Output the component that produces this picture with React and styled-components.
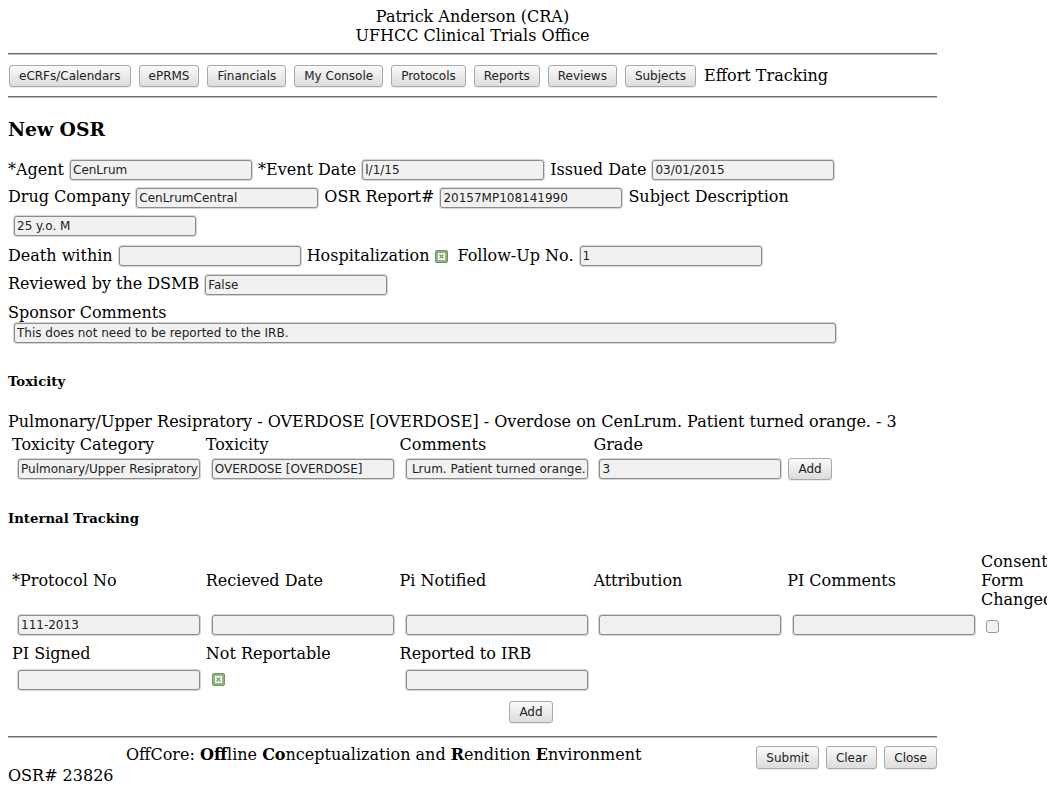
import React from "react";
import styled, { createGlobalStyle } from "styled-components";

const Global = createGlobalStyle`
  html {
    overflow: hidden;
  }
  body {
    margin: 8px 8px 0;
    background: #fff;
    color: #000;
    font-family: "DejaVu Serif", serif;
    font-size: 16px;
  }
`;

const Page = styled.div`
  width: 929px;
  line-height: 1.164;
`;

const Header = styled.div`
  text-align: center;
`;

const Rule = styled.hr`
  margin: ${(p) => p.$top || 8}px 0 8px;
  border: 0;
  border-top: 1px solid #6f6f6f;
  border-bottom: 1px solid #b8b8b8;
  height: 0;
`;

const Nav = styled.nav`
  display: flex;
  align-items: center;
  height: 25px;
  gap: 8px;
  padding-left: 1px;
`;

const Btn = styled.button`
  font-family: "DejaVu Sans", sans-serif;
  font-size: 12px;
  color: #222;
  height: ${(p) => p.$h || 22}px;
  padding: 0 ${(p) => p.$pad || 9}px;
  border: 1px solid #a9a9a9;
  border-radius: 3px;
  background: linear-gradient(#fafafa, #dcdcdc);
  box-shadow: 0 1px 0 rgba(0, 0, 0, 0.08);
  cursor: pointer;
  flex: none;
`;

const NavText = styled.span`
  padding-top: 2px;
`;

const Title = styled.h3`
  font-size: 18.72px;
  font-weight: bold;
  margin: 20px 0 16px;
  line-height: 22px;
`;

const Row = styled.div`
  display: flex;
  align-items: ${(p) => (p.$bottom ? "flex-end" : "center")};
  gap: 5px;
  height: ${(p) => p.$h || 27}px;
  padding-left: ${(p) => p.$indent || 0}px;
  white-space: nowrap;
`;

const Input = styled.input`
  box-sizing: border-box;
  font-family: "DejaVu Sans", sans-serif;
  font-size: 12px;
  color: #222;
  width: ${(p) => p.$w || 182}px;
  height: 20px;
  margin: 0 1px;
  padding: 0 1px 0 2px;
  border: 1px solid #8c8c8c;
  border-radius: 3px;
  background: #f1f1f1;
  box-shadow: 0 0 0 1px #d6d6d6;
  outline: none;
  text-align: ${(p) => p.$align || "left"};
  flex: none;
`;

const GreenCheck = styled.span`
  display: inline-flex;
  align-items: center;
  justify-content: center;
  box-sizing: border-box;
  width: 13px;
  height: 13px;
  margin: 0 ${(p) => p.$after || 2}px 0 1px;
  background: #8fb57c;
  border: 1px solid #6e9460;
  border-radius: 2px;
  flex: none;
`;

const EmptyCheck = styled.span`
  display: inline-block;
  box-sizing: border-box;
  width: 13px;
  height: 13px;
  margin-top: 3px;
  background: #f2f2f2;
  border: 1px solid #9a9a9a;
  border-radius: 3px;
`;

const SectionTitle = styled.h5`
  font-size: 13.28px;
  font-weight: bold;
  margin: ${(p) => p.$top || 28}px 0 0;
  line-height: 16px;
`;

const Summary = styled.div`
  margin-top: 22px;
  line-height: 19px;
  white-space: nowrap;
`;

const Grid = styled.div`
  display: grid;
  grid-template-columns: repeat(${(p) => p.$cols}, 193.8px) auto;
  margin-left: 4px;
  margin-top: ${(p) => p.$top || 0}px;
  align-items: center;
  width: max-content;
`;

const HeadCell = styled.div`
  height: ${(p) => p.$h || 19}px;
  display: flex;
  align-items: center;
  line-height: 18.6px;
  white-space: nowrap;
`;

const Cell = styled.div`
  display: flex;
  align-items: center;
  gap: 6px;
  height: ${(p) => p.$h || 25}px;
  padding-left: 5px;
`;

const Center = styled.div`
  display: flex;
  justify-content: center;
  width: 1046px;
  margin-top: ${(p) => p.$top || 0}px;
`;

const Footer = styled.div`
  display: flex;
  justify-content: space-between;
  align-items: flex-start;
`;

const Tagline = styled.div`
  padding-left: 118px;
  line-height: 18.6px;
`;

const Osr = styled.div`
  margin-top: 2px;
  line-height: 18.6px;
`;

const Buttons = styled.div`
  display: flex;
  gap: 7px;
`;

function Checked({ after }) {
  return (
    <GreenCheck $after={after}>
      <svg width="7" height="7" viewBox="0 0 7 7">
        <rect x="0" y="0" width="7" height="7" fill="#fff" />
        <path d="M1.5 1.5 L5.5 5.5 M5.5 1.5 L1.5 5.5" stroke="#7a9a6c" strokeWidth="1.3" />
      </svg>
    </GreenCheck>
  );
}

export default function App() {
  const nav = [
    "eCRFs/Calendars",
    "ePRMS",
    "Financials",
    "My Console",
    "Protocols",
    "Reports",
    "Reviews",
    "Subjects",
  ];
  return (
    <Page>
      <Global />
      <Header>
        <div>Patrick Anderson (CRA)</div>
        <div>UFHCC Clinical Trials Office</div>
      </Header>
      <Rule />
      <Nav>
        {nav.map((n) => (
          <Btn key={n}>{n}</Btn>
        ))}
        <NavText>Effort Tracking</NavText>
      </Nav>
      <Rule />
      <Title>New OSR</Title>

      <Row $h={28}>
        <span>*Agent</span>
        <Input defaultValue="CenLrum" />
        <span>*Event Date</span>
        <Input defaultValue="l/1/15" />
        <span>Issued Date</span>
        <Input defaultValue="03/01/2015" />
      </Row>
      <Row $h={27}>
        <span>Drug Company</span>
        <Input defaultValue="CenLrumCentral" />
        <span>OSR Report#</span>
        <Input defaultValue="20157MP108141990" />
        <span>Subject Description</span>
      </Row>
      <Row $h={30} $indent={5}>
        <Input defaultValue="25 y.o. M" />
      </Row>
      <Row $h={30}>
        <span>Death within</span>
        <Input />
        <span>Hospitalization</span>
        <Checked after={4} />
        <span>Follow-Up No.</span>
        <Input defaultValue="1" />
      </Row>
      <Row $h={27}>
        <span>Reviewed by the DSMB</span>
        <Input defaultValue="False" />
      </Row>
      <Row $h={24} $bottom>
        <span>Sponsor Comments</span>
      </Row>
      <Row $h={22} $indent={5}>
        <Input $w={822} defaultValue="This does not need to be reported to the IRB." />
      </Row>

      <SectionTitle $top={30}>Toxicity</SectionTitle>
      <Summary>
        Pulmonary/Upper Resipratory - OVERDOSE [OVERDOSE] - Overdose on CenLrum. Patient turned orange. - 3
      </Summary>
      <Grid $cols={4} $top={4}>
        <HeadCell $h={21}>Toxicity Category</HeadCell>
        <HeadCell $h={21}>Toxicity</HeadCell>
        <HeadCell $h={21}>Comments</HeadCell>
        <HeadCell $h={21}>Grade</HeadCell>
        <div />
        <Cell>
          <Input defaultValue="Pulmonary/Upper Resipratory" />
        </Cell>
        <Cell>
          <Input defaultValue="OVERDOSE [OVERDOSE]" />
        </Cell>
        <Cell>
          <Input $align="right" defaultValue="Lrum. Patient turned orange." />
        </Cell>
        <Cell>
          <Input defaultValue="3" />
          <Btn>Add</Btn>
        </Cell>
        <div />
      </Grid>

      <SectionTitle $top={30}>Internal Tracking</SectionTitle>
      <Grid $cols={5} $top={26}>
        <HeadCell $h={56}>*Protocol No</HeadCell>
        <HeadCell $h={56}>Recieved Date</HeadCell>
        <HeadCell $h={56}>Pi Notified</HeadCell>
        <HeadCell $h={56}>Attribution</HeadCell>
        <HeadCell $h={56}>PI Comments</HeadCell>
        <HeadCell $h={56}>
          Consent
          <br />
          Form
          <br />
          Changed
        </HeadCell>
        <Cell $h={32}>
          <Input defaultValue="111-2013" />
        </Cell>
        <Cell $h={32}>
          <Input />
        </Cell>
        <Cell $h={32}>
          <Input />
        </Cell>
        <Cell $h={32}>
          <Input />
        </Cell>
        <Cell $h={32}>
          <Input />
        </Cell>
        <Cell $h={32}>
          <EmptyCheck />
        </Cell>
        <HeadCell $h={26}>PI Signed</HeadCell>
        <HeadCell $h={26}>Not Reportable</HeadCell>
        <HeadCell $h={26}>Reported to IRB</HeadCell>
        <div />
        <div />
        <div />
        <Cell>
          <Input />
        </Cell>
        <Cell>
          <Checked />
        </Cell>
        <Cell>
          <Input />
        </Cell>
        <div />
        <div />
        <div />
      </Grid>
      <Center $top={9}>
        <Btn>Add</Btn>
      </Center>
      <Rule $top={13} />
      <Footer>
        <div>
          <Tagline>
            OffCore: <b>Off</b>line <b>Co</b>nceptualization and <b>R</b>endition <b>E</b>nvironment
          </Tagline>
          <Osr>OSR# 23826</Osr>
        </div>
        <Buttons>
          <Btn $h={23}>Submit</Btn>
          <Btn $h={23}>Clear</Btn>
          <Btn $h={23}>Close</Btn>
        </Buttons>
      </Footer>
    </Page>
  );
}
